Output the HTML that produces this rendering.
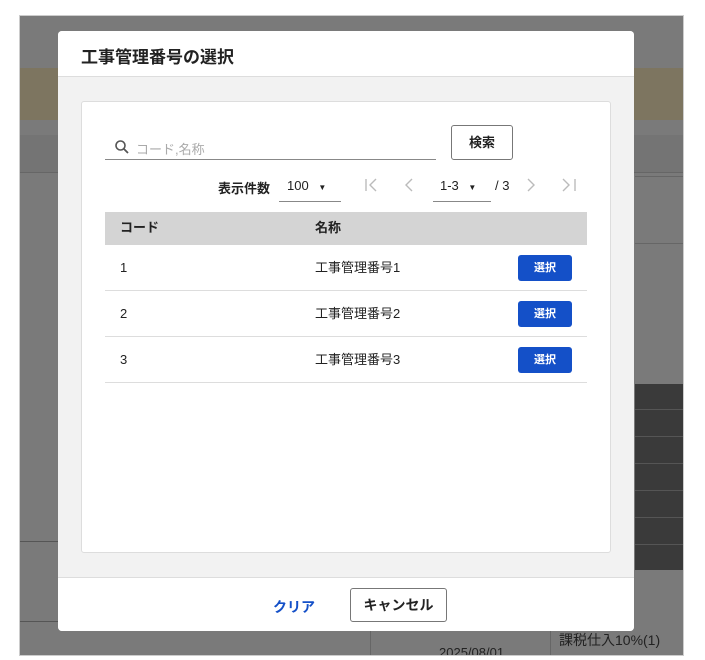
<!DOCTYPE html>
<html><head><meta charset="utf-8"><style>
*{margin:0;padding:0;box-sizing:border-box}
body{width:705px;height:660px;background:#fff;position:relative;overflow:hidden;font-family:"Liberation Sans","Noto Sans CJK JP",sans-serif;color:#222}
.a{position:absolute}
.frame{left:19px;top:15px;width:665px;height:641px;background:#7a7a7a;border:1px solid #ccc;overflow:hidden}
.dlg{left:58px;top:31px;width:576px;height:600px;background:#f2f2f2;border-radius:4px;overflow:hidden}
.row{position:absolute;left:24px;width:482px;height:46px;border-bottom:1px solid #ddd;font-size:13px}
.row span{position:absolute;top:15px;line-height:16px}
.sel{position:absolute;right:15px;top:10px;width:54px;height:26px;background:#1450c8;color:#fff;border-radius:3px;font-size:11px;font-weight:bold;text-align:center;line-height:26px}
.dk{left:615px;width:50px;height:26px;border-bottom:1px solid #555}
</style></head><body>
<div class="a frame">
 <div class="a" style="left:0;top:52px;width:665px;height:52px;background:#7d7560"></div>
 <div class="a" style="left:0;top:119px;width:665px;height:38px;background:#747474;border-bottom:1px solid #666"></div>
 <div class="a" style="left:615px;top:160px;width:50px;height:68px;border-top:1px solid #666;border-bottom:1px solid #666"></div>
 <div class="a" style="left:615px;top:368px;width:50px;height:186px;background:#3a3a3a"></div>
 <div class="a dk" style="top:368px"></div><div class="a dk" style="top:395px"></div><div class="a dk" style="top:422px"></div><div class="a dk" style="top:449px"></div><div class="a dk" style="top:476px"></div><div class="a dk" style="top:503px"></div>
 <div class="a" style="left:0;top:525px;width:40px;height:1px;background:#555"></div>
 <div class="a" style="left:0;top:605px;width:40px;height:1px;background:#555"></div>
 <div class="a" style="left:530px;top:610px;width:135px;height:30px;font-size:14px;color:#222;padding:4px 0 0 8px;border-left:1px solid #666">課税仕入10%(1)</div>
 <div class="a" style="left:350px;top:615px;width:180px;height:30px;font-size:13px;color:#222;padding:14px 0 0 68px;border-left:1px solid #666">2025/08/01</div>
</div>
<div class="a dlg">
 <div class="a" style="left:0;top:0;width:576px;height:46px;background:#fff;border-bottom:1px solid #ddd;font-size:17px;font-weight:bold;padding:12px 0 0 23px">工事管理番号の選択</div>
 <div class="a" style="left:23px;top:70px;width:530px;height:452px;background:#fff;border:1px solid #ddd;border-radius:3px">
  <div class="a" style="left:23px;top:35px;width:331px;height:23px;border-bottom:1px solid #888">
   <svg class="a" style="left:9px;top:2px" width="16" height="16" viewBox="0 0 16 16"><circle cx="6.5" cy="6.5" r="4.5" fill="none" stroke="#555" stroke-width="1.6"/><line x1="10" y1="10" x2="14" y2="14" stroke="#555" stroke-width="1.8"/></svg>
   <span class="a" style="left:31px;top:2px;font-size:13px;color:#aaa">コード,名称</span>
  </div>
  <div class="a" style="left:369px;top:23px;width:62px;height:35px;border:1px solid #777;border-radius:3px;font-size:13px;font-weight:bold;text-align:center;line-height:33px">検索</div>
  <span class="a" style="left:136px;top:76px;font-size:13px;font-weight:bold">表示件数</span>
  <div class="a" style="left:197px;top:70px;width:62px;height:30px;border-bottom:1px solid #888;font-size:13px;padding:6px 0 0 8px">100 <span style="font-size:8px;margin-left:6px">▼</span></div>
  <svg class="a" style="left:280px;top:76px" width="200" height="14" viewBox="0 0 200 14" fill="none" stroke="#bbb" stroke-width="1.4">
   <line x1="4" y1="1" x2="4" y2="13"/><polyline points="14,1 8,7 14,13"/>
   <polyline points="50,1 44,7 50,13"/>
  </svg>
  <svg class="a" style="left:440px;top:76px" width="60" height="14" viewBox="0 0 60 14" fill="none" stroke="#bbb" stroke-width="1.4">
   <polyline points="6,1 12,7 6,13"/><polyline points="41,1 47,7 41,13"/><line x1="53" y1="1" x2="53" y2="13"/>
  </svg>
  <div class="a" style="left:351px;top:70px;width:58px;height:30px;border-bottom:1px solid #888;font-size:13px;padding:6px 0 0 7px">1-3 <span style="font-size:8px;margin-left:6px">▼</span></div>
  <span class="a" style="left:413px;top:76px;font-size:13px">/ 3</span>
  <div class="a" style="left:23px;top:110px;width:482px;height:33px;background:#d4d4d4;font-size:13px;font-weight:bold"><span class="a" style="left:15px;top:8px;line-height:16px">コード</span><span class="a" style="left:210px;top:8px;line-height:16px">名称</span></div>
  <div class="row" style="top:143px;left:23px"><span style="left:15px">1</span><span style="left:210px">工事管理番号1</span><div class="sel">選択</div></div>
  <div class="row" style="top:189px;left:23px"><span style="left:15px">2</span><span style="left:210px">工事管理番号2</span><div class="sel">選択</div></div>
  <div class="row" style="top:235px;left:23px"><span style="left:15px">3</span><span style="left:210px">工事管理番号3</span><div class="sel">選択</div></div>
 </div>
 <div class="a" style="left:0;top:546px;width:576px;height:54px;background:#fff;border-top:1px solid #ddd">
  <span class="a" style="left:215px;top:19px;font-size:14px;font-weight:bold;color:#1450c8">クリア</span>
  <div class="a" style="left:292px;top:10px;width:97px;height:34px;border:1px solid #777;border-radius:3px;font-size:14px;font-weight:bold;text-align:center;line-height:32px">キャンセル</div>
 </div>
</div>
</body></html>
